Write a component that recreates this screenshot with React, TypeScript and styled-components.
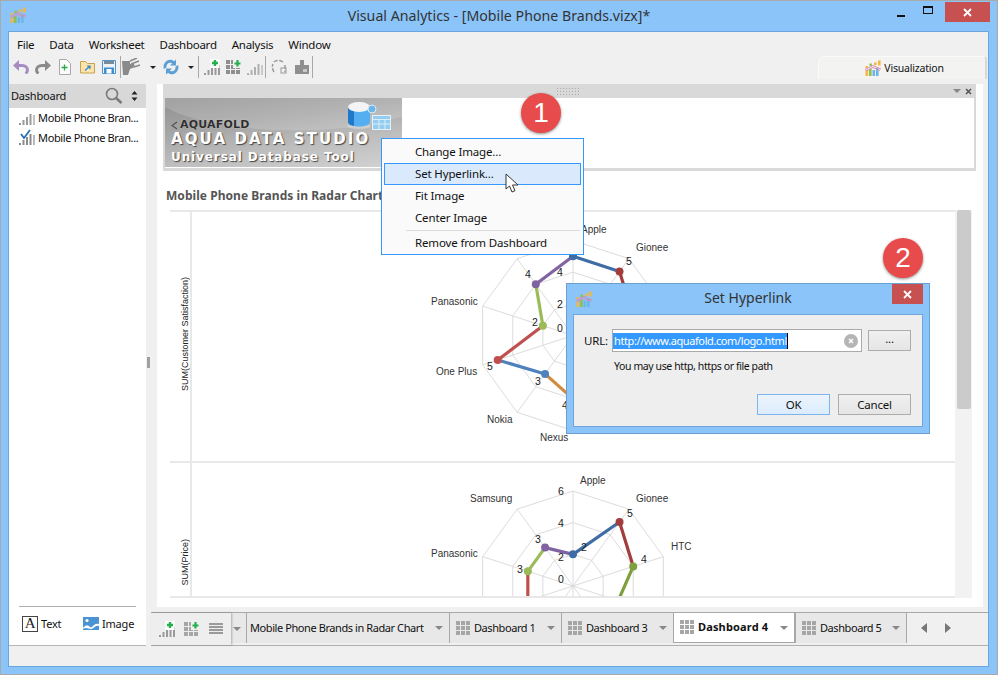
import React from "react";
import styled, { createGlobalStyle } from "styled-components";

const UI = `"Noto Sans", "Liberation Sans", sans-serif`;
const CH = `"Liberation Sans", Arial, sans-serif`;
const LG = `"DejaVu Sans", "Liberation Sans", sans-serif`;

const Global = createGlobalStyle`
  html, body { margin: 0; padding: 0; background: #fff; }
  * { box-sizing: border-box; }
`;

const Win = styled.div`
  position: relative; width: 998px; height: 675px; overflow: hidden;
  background: #8ac4f9; border: 1px solid #a9a9a9; display: flex; flex-direction: column;
  font: 11.5px ${UI}; color: #111;
`;
const TitleBar = styled.div`
  height: 30px; flex: none; display: grid; grid-template-columns: 1fr auto 1fr; align-items: start; padding-left: 9px;
`;
const TitleIconSlot = styled.div`padding-top: 6px; display: flex;`;
const TitleText = styled.div`font-size: 14.2px; color: #333; padding-top: 5px; margin-right: 9px;`;
const WinButtons = styled.div`display: flex; justify-content: flex-end; align-items: flex-start; margin-right: 7px; padding-top: 1px;`;
const GlyphBtn = styled.div`width: 27px; height: 20px; display: flex; align-items: center; justify-content: center;`;
const MinGlyph = styled.div`width: 8px; height: 2px; background: #111; margin-top: 7px;`;
const MaxGlyph = styled.div`width: 10px; height: 8px; border: 1px solid #111; border-top-width: 2px; margin-top: -5px;`;
const CloseBtn = styled.div`
  width: 45px; height: 20px; margin-left: 4px; background: #c75050; display: flex; align-items: center; justify-content: center;
`;
const Client = styled.div`
  flex: 1; margin: 0 8px 7px 7px; border: 1px solid #69a5de; background: #f0f0f0;
  display: flex; flex-direction: column; min-height: 0;
`;
const MenuBar = styled.div`
  height: 23px; flex: none; display: flex; align-items: center; padding: 2px 0 0 8px; gap: 15px; letter-spacing: -0.26px;
`;
const ToolRow = styled.div`height: 24px; flex: none; display: flex; align-items: center; padding-left: 1px;`;
const ToolSlot = styled.div<{ $w?: number; $ml?: number }>`
  width: ${p => p.$w ?? 22}px; height: 22px; margin-left: ${p => p.$ml ?? 0}px;
  display: flex; align-items: center; justify-content: center; flex: none;
`;
const ToolSep = styled.div`width: 1px; height: 22px; background: #a8a8a8; flex: none;`;
const VizTab = styled.div`
  margin-left: auto; margin-right: 1px; margin-top: 1px; width: 169px; height: 23px; border: 1px solid #fafafa; border-bottom: none;
  border-right: 2px solid #d8d8d8; border-radius: 6px 4px 0 0; background: #f3f3f2; display: flex; align-items: center; justify-content: center; gap: 3px;
  font-size: 10.5px; padding-left: 5px; letter-spacing: -0.2px;
`;
const Body = styled.div`flex: 1; display: flex; min-height: 0;`;
const Sidebar = styled.div`
  width: 137px; margin-top: 5px; background: #fff; border-bottom: 1px solid #b5b5b5; display: flex; flex-direction: column; flex: none;
`;
const SideHead = styled.div`
  height: 24px; flex: none; background: #d8d8d8; display: flex; align-items: center; padding: 0 8px 2px 2px; font-size: 11px; letter-spacing: -0.2px;
`;
const SideTitle = styled.span`flex: 1;`;
const SortSlot = styled.span`display: flex; margin-left: 8px; padding-top: 2px;`;
const SideItem = styled.div`
  height: 20px; flex: none; display: flex; align-items: center; padding: 0 0 2px 9px; gap: 3px; font-size: 11px; white-space: nowrap; letter-spacing: -0.35px;
`;
const SideFoot = styled.div`
  margin: auto 10px 0; height: 39px; flex: none; border-top: 1px solid #b0b0b0; display: flex; align-items: center; padding: 0 0 5px 3px;
`;
const FootBtn = styled.div<{ $w: number }>`width: ${p => p.$w}px; flex: none; display: flex; align-items: center; gap: 3px; font-size: 11px; letter-spacing: -0.2px;`;
const TextGlyph = styled.div`
  width: 16px; height: 16px; border: 1px solid #444; display: flex; align-items: center; justify-content: center;
  font: 15px "Liberation Serif", serif; color: #222; line-height: 1; flex: none;
`;
const Splitter = styled.div`width: 5px; display: flex; align-items: center; justify-content: center; flex: none;`;
const Grip = styled.div`
  width: 3px; height: 11px; background: radial-gradient(circle, #9a9a9a 0.7px, transparent 0.8px) 0 0 / 2px 2px;
`;
const Right = styled.div`flex: 1; display: flex; flex-direction: column; min-width: 0;`;
const Panel = styled.div`
  margin: 5px 5px 5px 6px; flex: 1; background: #fff; padding: 0 7px 0 6px; min-height: 0; display: flex; flex-direction: column;
`;
const ImageWidget = styled.div`
  flex: none; border-left: 2px solid #d9d9d9; border-right: 2px solid #d9d9d9; border-bottom: 3px solid #d9d9d9;
`;
const WidgetHead = styled.div`
  height: 14px; margin: 0 -2px; background: #d9d9d9; display: flex; align-items: center; justify-content: flex-end; gap: 4px; padding-right: 4px; position: relative;
`;
const HandleDots = styled.div`
  position: absolute; left: 393px; top: 3px; width: 24px; height: 10px;
  background: radial-gradient(circle, #aaa 0.7px, transparent 0.8px) 0 0 / 3px 3px;
`;
const Caret = styled.div<{ $c?: string; $w?: number }>`
  width: 0; height: 0; flex: none;
  border-left: ${p => p.$w ?? 4}px solid transparent; border-right: ${p => p.$w ?? 4}px solid transparent;
  border-top: ${p => p.$w ?? 4}px solid ${p => p.$c ?? "#888"};
`;
const Logo = styled.div`
  position: relative; width: 237px; height: 69px; margin-bottom: 1px; padding: 21px 0 0 6px; overflow: hidden;
  background:
    radial-gradient(ellipse 240px 70px at 130px -10px, rgba(255,255,255,.16) 60%, transparent 61%),
    linear-gradient(172deg, #8f8f8f 0%, #a5a5a5 35%, #bdbdbd 65%, #d2d2d2 100%);
  display: flex; flex-direction: column; font-family: ${LG}; font-weight: 700;
`;
const LogoSmall = styled.div`
  display: flex; align-items: center; gap: 2px; font-size: 11px; color: #2e2e2e; line-height: 12px; letter-spacing: 0.2px; text-shadow: 0 0 1px #ddd;
`;
const LogoBig = styled.div`
  font-size: 15px; line-height: 16px; color: #fff; letter-spacing: 2.1px; text-shadow: 1px 1px 1px #444; white-space: nowrap;
`;
const LogoSub = styled.div`
  font-size: 12px; line-height: 14px; margin-top: 3px; color: #fff; letter-spacing: 0.9px; text-shadow: 1px 1px 1px #444; white-space: nowrap;
`;
const LogoArt = styled.svg`position: absolute; left: 180px; top: 1px;`;
const ChartTitle = styled.div`
  height: 39px; flex: none; display: flex; align-items: center; padding: 10px 0 0 3px; font-size: 12px; font-weight: 700; color: #555; white-space: nowrap; letter-spacing: 0.05px;
`;
const ChartFrame = styled.div`margin-left: 7px; display: flex; height: 388px; flex: none;`;
const Viewport = styled.div`
  width: 785px; height: 388px; border-top: 2px solid #e8e8e8; border-bottom: 2px solid #e8e8e8; overflow: hidden; flex: none;
`;
const ChartRow = styled.div<{ $h: number }>`
  height: ${p => p.$h}px; display: flex; border-bottom: 2px solid #e8e8e8;
`;
const AxisCell = styled.div`
  width: 22px; flex: none; border-right: 2px solid #e8e8e8; display: flex; align-items: center; justify-content: center; padding-bottom: 4px;
`;
const AxisText = styled.div`
  writing-mode: vertical-rl; transform: rotate(180deg); font: 9px ${CH}; color: #222; white-space: nowrap; margin-left: 10px;
`;
const Track = styled.div`width: 17px; background: #f2f2f2; padding: 0 1px 0 2px;`;
const Thumb = styled.div`height: 199px; background: #cbcbcb; border-radius: 2px;`;
const TabBar = styled.div`
  height: 34px; flex: none; border-top: 1px solid #a8a8a8; border-bottom: 1px solid #b0b0b0; display: flex; background: #f0f0f0;
`;
const TabTools = styled.div`
  width: 80px; flex: none; display: flex; align-items: center; padding-left: 3px; box-shadow: 1px 0 2px rgba(0,0,0,.25); position: relative; background: #eee;
`;
const TabCaretArea = styled.div`
  width: 15px; flex: none; background: #e8e8e8; display: flex; align-items: center; justify-content: center; padding-top: 1px;
  margin-bottom: 2px; padding-right: 4px;
`;
const Tab = styled.div<{ $w: number; $active?: boolean; $pl?: number }>`
  width: ${p => p.$w}px; flex: none; display: flex; align-items: center; gap: 3px; padding: 0 6px 0 ${p => p.$pl ?? 6}px;
  white-space: nowrap; font-size: 11px; letter-spacing: ${p => (p.$active ? "0.15px" : "-0.42px")};
  background: ${p => (p.$active ? "#fff" : "#e8e8e8")};
  border-left: 1px solid #a8a8a8;
  margin-top: ${p => (p.$active ? "-1px" : "0")};
  margin-bottom: 2px;
  border-top: ${p => (p.$active ? "1px solid #a8a8a8" : "none")};
  border-right: ${p => (p.$active ? "1px solid #a8a8a8" : "none")};
  border-bottom: ${p => (p.$active ? "1px solid #a8a8a8" : "none")};
  font-weight: ${p => (p.$active ? 700 : 400)};
`;
const TabLabel = styled.span`flex: 1; padding-bottom: 2px;`;
const TabNav = styled.div`
  flex: 1; display: flex; align-items: center; gap: 18px; padding-left: 14px; border-left: 1px solid #a8a8a8; margin-bottom: 2px;
`;
const NavArrow = styled.div<{ $dir: "l" | "r" }>`
  width: 0; height: 0; border-top: 5px solid transparent; border-bottom: 5px solid transparent;
  ${p => (p.$dir === "l" ? "border-right: 6px solid #777;" : "border-left: 6px solid #777;")}
`;
const Status = styled.div`height: 20px; flex: none;`;

const CtxMenu = styled.div`
  position: absolute; left: 380px; top: 137px; width: 203px; height: 117px; background: #fafafa; border: 1px solid #3399ff;
  padding: 2px 2px; display: flex; flex-direction: column; letter-spacing: -0.15px;
`;
const CtxItem = styled.div<{ $hot?: boolean }>`
  height: 22px; flex: none; display: flex; align-items: center; padding: 0 0 1px 30px;
  border: 1px solid ${p => (p.$hot ? "#3399ff" : "transparent")}; background: ${p => (p.$hot ? "#daeafc" : "transparent")};
`;
const CtxSep = styled.div`height: 1px; background: #dcdcdc; margin: 1px 1px 1px 22px; flex: none;`;
const Badge = styled.div<{ $x: number; $y: number }>`
  position: absolute; left: ${p => p.$x}px; top: ${p => p.$y}px; width: 40px; height: 40px; border-radius: 50%;
  background: #e84b4b; color: #fff; font: 28px ${CH}; display: flex; align-items: center; justify-content: center;
  box-shadow: 0 1px 3px rgba(0,0,0,.45);
`;
const Cursor = styled.svg`position: absolute; left: 504px; top: 172px;`;
const Dialog = styled.div`
  position: absolute; left: 565px; top: 282px; width: 364px; height: 151px; background: #8ac4f9; border: 1px solid #6b9fd0;
  padding: 0 6px 6px; display: flex; flex-direction: column;
`;
const DlgHead = styled.div`height: 30px; flex: none; display: grid; grid-template-columns: 1fr auto 1fr; align-items: start;`;
const DlgIconSlot = styled.div`padding: 7px 0 0 3px; display: flex;`;
const DlgTitle = styled.div`font-size: 14px; color: #333; padding-top: 4px;`;
const DlgClose = styled.div`
  justify-self: end; width: 31px; height: 20px; background: #c75050; display: flex; align-items: center; justify-content: center;
`;
const DlgBody = styled.div`
  flex: 1; background: #eee; border: 1px solid #6ea6dc; padding: 14px 11px 0 10px; display: flex; flex-direction: column;
`;
const UrlRow = styled.div`display: flex; align-items: center; height: 23px;`;
const UrlLabel = styled.span`width: 28px; flex: none; letter-spacing: -0.2px;`;
const UrlInput = styled.div`
  width: 250px; height: 23px; background: #fff; border: 1px solid #aaa; display: flex; align-items: center; padding: 0 3px 0 0;
`;
const Selected = styled.span`
  background: #3399ff; color: #fff; border-right: 1px solid #000; padding: 0 0 0 1px; line-height: 16px; white-space: nowrap; font-size: 11px; letter-spacing: -0.4px;
`;
const ClearBtn = styled.div`
  margin-left: auto; width: 14px; height: 14px; border-radius: 50%; background: #b5b5b5; display: flex; align-items: center; justify-content: center;
`;
const GreyBtn = styled.div<{ $w: number; $primary?: boolean }>`
  width: ${p => p.$w}px; height: 21px; flex: none; display: flex; align-items: center; justify-content: center; letter-spacing: -0.2px;
  border: 1px solid ${p => (p.$primary ? "#7eb4ea" : "#acacac")};
  background: ${p => (p.$primary ? "linear-gradient(#ecf4fc, #dcecfc)" : "linear-gradient(#f0f0f0, #e5e5e5)")};
`;
const BrowseBtn = styled(GreyBtn)`margin-left: 6px; padding-bottom: 4px;`;
const Hint = styled.div`font-size: 10.5px; padding: 6px 0 0 30px; height: 27px; line-height: 16px; letter-spacing: -0.4px;`;
const BtnRow = styled.div`display: flex; justify-content: flex-end; gap: 8px; margin-top: 15px;`;

/* ---------- drawings ---------- */
const IconSvg = styled.svg`flex: none; display: block;`;
const Svg: React.FC<{ w?: number; h?: number; children: React.ReactNode }> = ({ w = 16, h = 16, children }) => (
  <IconSvg width={w} height={h} viewBox={`0 0 ${w} ${h}`} fill="none">{children}</IconSvg>
);
const AppIcon = () => (
  <Svg>
    <rect x="0.5" y="10" width="2.6" height="6" fill="#f6b73c" />
    <rect x="4" y="9" width="2.6" height="7" fill="#8cc152" />
    <rect x="7.5" y="10" width="2.6" height="6" fill="#6db7e8" />
    <rect x="11" y="8" width="2.6" height="8" fill="#6db7e8" />
    <rect x="13" y="0.5" width="2.6" height="5" fill="#f6b73c" />
    <rect x="9" y="2.500" width="2.6" height="2.500" fill="#f6b73c" />
    <rect x="4.5" y="3.500" width="2.4" height="2.500" fill="#8cc152" />
    <rect x="0.5" y="6" width="2.4" height="2" fill="#f6b73c" />
    <path d="M0 9.500 8 5.500 16 9M1 11 8 7.500 15 10.500" stroke="#d78bb0" strokeWidth="1" />
  </Svg>
);
const X = ({ c = "#fff", s = 9, sw = 1.8 }: { c?: string; s?: number; sw?: number }) => (
  <Svg w={s} h={s}><path d={`M1 1 ${s - 1} ${s - 1}M${s - 1} 1 1 ${s - 1}`} stroke={c} strokeWidth={sw} /></Svg>
);
const Bars = ({ c = "#9a9a9a", check, plus }: { c?: string; check?: boolean; plus?: boolean }) => (
  <Svg w={17} h={17}>
    <rect x="1" y="14" width="2" height="2" fill={c} />
    <rect x="4.500" y="11" width="2" height="5" fill={c} />
    <rect x="8" y="8" width="2" height="8" fill={c} />
    <rect x="11.500" y="5" width="2" height="11" fill={c} />
    <rect x="15" y="6" width="2" height="10" fill={c} opacity={plus ? 1 : 0.6} />
    {check && <path d="M3 5 6 9 12 1" stroke="#2a6fb5" strokeWidth="1.800" />}
    {plus && <g><rect x="7.500" y="0" width="9" height="9" fill="#fff" /><path d="M12 1v6M9 4h6" stroke="#22b14c" strokeWidth="2.400" /></g>}
  </Svg>
);
const Grid = ({ c = "#a6a6a6", plus }: { c?: string; plus?: boolean }) => (
  <Svg w={15} h={15}>
    {[0, 5, 10].map(y => [0, 5, 10].map(x => <rect key={`${x}-${y}`} x={x} y={y} width="4" height="4" fill={c} />))}
    {plus && <g><rect x="7" y="-1" width="9" height="9" fill="#f0f0f0" /><path d="M11.500 0v6.500M8.500 3.500h6" stroke="#22b14c" strokeWidth="2.200" /></g>}
  </Svg>
);
const ListIcon = () => (
  <Svg w={15} h={12}>{[0, 3, 6, 9].map(y => <rect key={y} x="0" y={y} width="14" height="2" fill="#9a9a9a" />)}</Svg>
);
const Undo = ({ c, flip }: { c: string; flip?: boolean }) => (
  <Svg w={16} h={14}>
    <g transform={flip ? "translate(16 0) scale(-1 1)" : undefined}>
      <path d="M0 5.500 6 0v11z" fill={c} />
      <path d="M5 5.500h4c3.500 0 5.500 2 5.500 4.500 0 1.500-.8 2.800-2 3.500" stroke={c} strokeWidth="3" />
    </g>
  </Svg>
);
const NewDoc = () => (
  <Svg w={14} h={16}>
    <path d="M1.500 .5h7l4 4v11h-11z" fill="#fbfbfb" stroke="#a8a8a8" />
    <path d="M6.500 5.500v6M3.500 8.500h6" stroke="#2aa84a" strokeWidth="1.300" />
  </Svg>
);
const Folder = () => (
  <Svg w={15} h={14}>
    <path d="M.5 13V1.500h5l2 2h7V13z" fill="#fbe3ae" stroke="#c9a24e" />
    <path d="M5 10.500 10 6M7 6h3v3" stroke="#2f86c9" strokeWidth="1.200" />
  </Svg>
);
const Save = () => (
  <Svg w={14} h={14}>
    <path d="M.5 .5h13v13H.5z" fill="#eef3f7" stroke="#4d93cc" />
    <rect x="2" y="1" width="10" height="3" fill="#7c8a96" />
    <rect x="2" y="7.500" width="10" height="6" fill="#3e8fd0" />
    <rect x="4.500" y="9" width="5" height="4.500" fill="#fff" />
  </Svg>
);
const Brush = () => (
  <Svg w={20} h={18}>
    <path d="M1 3h8v3h4l1 3-5 2-2 6H2z" fill="#8a8a8a" />
    <path d="M9 3 16 0M10 6 18 3M13 9 19 7" stroke="#8a8a8a" strokeWidth="1.500" />
  </Svg>
);
const Refresh = () => (
  <Svg w={16} h={16}>
    <path d="M13 .5v6H7l2.200-2.200C6 2.500 3 5 3.500 8.500L.8 10C-.8 3.500 6 -2 11 2.300z" fill="#5a9fd6" />
    <path d="M3 15.500v-6h6l-2.200 2.200c3.200 1.800 6.200-.7 5.700-4.200L15.200 6c1.600 6.500-5.200 12-10.200 7.700z" fill="#5a9fd6" />
  </Svg>
);
const Shape = () => (
  <Svg w={16} h={16}>
    <path d="M3 3c2-2 6-2 9 0M14 6v7M3 13c-2-3-2-6-1-8" stroke="#9a9a9a" strokeWidth="1.500" strokeDasharray="4 1.500" />
    <rect x="10" y="9" width="5" height="5" stroke="#9a9a9a" />
  </Svg>
);
const Blocks = () => (
  <Svg w={15} h={14}>
    <path d="M0 5h5V0h4v5h5v9H0z" fill="#8f8f8f" />
    <rect x="8" y="9" width="4" height="3" fill="#c8c8c8" />
  </Svg>
);
const Search = () => (
  <Svg w={18} h={17}>
    <circle cx="7" cy="7" r="5.500" stroke="#7a7a7a" strokeWidth="1.600" />
    <path d="M11 11 16.500 16" stroke="#7a7a7a" strokeWidth="2.600" />
  </Svg>
);
const SortIcon = () => (
  <Svg w={7} h={10}><path d="M3.500 0 6.500 3.500H.5zM3.500 10 .5 6.500h6z" fill="#222" /></Svg>
);
const ImgIcon = () => (
  <Svg w={16} h={13}>
    <rect width="16" height="13" fill="#4a94d4" />
    <circle cx="4" cy="3.500" r="1.600" fill="#fff" />
    <path d="M0 11c3-4 5-3 7-1s4-5 9-3v2c-4-1-5 3-8 3s-5-2-8 0z" fill="#fff" />
  </Svg>
);

/* ---------- radar ---------- */
const AXES = 10;
const R = 95;
const pt = (i: number, r: number, cx: number, cy: number): [number, number] => {
  const a = (i * 2 * Math.PI) / AXES;
  return [cx + r * Math.sin(a), cy - r * Math.cos(a)];
};
type RadarProps = {
  h: number; cy: number; values: number[]; colors: string[];
  labels: { t: string; x: number; y: number }[];
  nums: { t: string; x: number; y: number }[];
};
const RadarSvg = styled.svg`flex: none; display: block;`;
const Radar: React.FC<RadarProps> = ({ h, cy, values, colors, labels, nums }) => {
  const cx = 381;
  const unit = R / 6;
  const points = values.map((v, i) => pt(i, v * unit, cx, cy));
  return (
    <RadarSvg width="761" height={h}>
      {[2, 4, 6].map(v => (
        <polygon key={v} fill="none" stroke="#dcdcdc"
          points={Array.from({ length: AXES }, (_, i) => pt(i, v * unit, cx, cy).join(",")).join(" ")} />
      ))}
      {Array.from({ length: AXES }, (_, i) => {
        const [x, y] = pt(i, R, cx, cy);
        return <line key={i} x1={cx} y1={cy} x2={x} y2={y} stroke="#dcdcdc" />;
      })}
      {points.map((p, i) => {
        const next = points[(i + 1) % AXES];
        return <line key={i} x1={p[0]} y1={p[1]} x2={next[0]} y2={next[1]} stroke={colors[i]} strokeWidth="3.2" />;
      })}
      {points.map((p, i) => <circle key={i} cx={p[0]} cy={p[1]} r="4" fill={colors[i]} />)}
      {labels.map(l => <text key={l.t} x={l.x} y={l.y} fontFamily={CH} fontSize="10" fill="#333">{l.t}</text>)}
      {nums.map((n, i) => <text key={i} x={n.x} y={n.y} fontFamily={CH} fontSize="10.500" fill="#222">{n.t}</text>)}
    </RadarSvg>
  );
};

const C = { blue: "#3f6ca5", red: "#a33d3d", green: "#7f9f3f", orange: "#d08a3e", blue2: "#4f81bd", red2: "#c0504d", lime: "#9bbb59", purple: "#8064a2", gray: "#bbb" };
const X0 = 192;
const chart1: RadarProps = {
  h: 249, cy: 123.5,
  values: [5, 5, 4, 3, 2, 4, 3, 5, 2, 4],
  colors: [C.blue, C.red, C.gray, C.gray, C.gray, C.orange, C.blue2, C.red2, C.lime, C.purple],
  labels: [
    { t: "Apple", x: 581 - X0, y: 21 }, { t: "Gionee", x: 636 - X0, y: 39 },
    { t: "Panasonic", x: 431 - X0, y: 93 }, { t: "One Plus", x: 436 - X0, y: 163 },
    { t: "Nokia", x: 487 - X0, y: 211 }, { t: "Nexus", x: 540 - X0, y: 229 },
  ],
  nums: [
    { t: "5", x: 626 - X0, y: 53 }, { t: "4", x: 525 - X0, y: 66 }, { t: "4", x: 557 - X0, y: 64 },
    { t: "2", x: 557 - X0, y: 96 }, { t: "2", x: 532 - X0, y: 114 }, { t: "0", x: 557 - X0, y: 120 },
    { t: "5", x: 487 - X0, y: 158 }, { t: "3", x: 535 - X0, y: 173 }, { t: "4", x: 562 - X0, y: 197 },
  ],
};
const chart2: RadarProps = {
  h: 202, cy: 123,
  values: [2, 5, 4, 3, 2, 2, 2, 3, 3, 3],
  colors: [C.blue, C.red, C.green, C.gray, C.gray, C.gray, C.gray, C.red2, C.lime, C.purple],
  labels: [
    { t: "Apple", x: 580 - X0, y: 21 }, { t: "Samsung", x: 470 - X0, y: 39 }, { t: "Gionee", x: 636 - X0, y: 39 },
    { t: "HTC", x: 671 - X0, y: 87 }, { t: "Panasonic", x: 431 - X0, y: 94 },
  ],
  nums: [
    { t: "6", x: 558 - X0, y: 32 }, { t: "5", x: 627 - X0, y: 54 }, { t: "4", x: 558 - X0, y: 64 },
    { t: "3", x: 535 - X0, y: 80 }, { t: "2", x: 581 - X0, y: 88 }, { t: "2", x: 558 - X0, y: 98 },
    { t: "4", x: 641 - X0, y: 100 }, { t: "3", x: 517 - X0, y: 110 }, { t: "0", x: 558 - X0, y: 120 },
  ],
};

const TABS = [
  { label: "Dashboard 1", w: 112 }, { label: "Dashboard 3", w: 112 },
];

export default function App() {
  return (
    <>
      <Global />
      <Win>
        <TitleBar>
          <TitleIconSlot><AppIcon /></TitleIconSlot>
          <TitleText>Visual Analytics - [Mobile Phone Brands.vizx]*</TitleText>
          <WinButtons>
            <GlyphBtn><MinGlyph /></GlyphBtn>
            <GlyphBtn><MaxGlyph /></GlyphBtn>
            <CloseBtn><X s={9} /></CloseBtn>
          </WinButtons>
        </TitleBar>
        <Client>
          <MenuBar>
            {["File", "Data", "Worksheet", "Dashboard", "Analysis", "Window"].map(m => <span key={m}>{m}</span>)}
          </MenuBar>
          <ToolRow>
            <ToolSlot><Undo c="#a78cc4" /></ToolSlot>
            <ToolSlot><Undo c="#8a8a8a" flip /></ToolSlot>
            <ToolSlot><NewDoc /></ToolSlot>
            <ToolSlot><Folder /></ToolSlot>
            <ToolSlot><Save /></ToolSlot>
            <ToolSep />
            <ToolSlot $w={20}><Brush /></ToolSlot>
            <ToolSlot $w={24}><Caret $c="#222" $w={3} /></ToolSlot>
            <ToolSlot $w={12}><Refresh /></ToolSlot>
            <ToolSlot $w={14} $ml={7}><Caret $c="#222" $w={3} /></ToolSlot>
            <ToolSep />
            <ToolSlot $w={24}><Bars plus /></ToolSlot>
            <ToolSlot $w={20}><Grid plus c="#8f8f8f" /></ToolSlot>
            <ToolSlot $w={22}><Bars c="#b0b0b0" /></ToolSlot>
            <ToolSep />
            <ToolSlot $w={26}><Shape /></ToolSlot>
            <ToolSlot $w={20}><Blocks /></ToolSlot>
            <ToolSep />
            <VizTab><AppIcon />Visualization</VizTab>
          </ToolRow>
          <Body>
            <Sidebar>
              <SideHead>
                <SideTitle>Dashboard</SideTitle>
                <Search />
                <SortSlot><SortIcon /></SortSlot>
              </SideHead>
              <SideItem><Bars />Mobile Phone Bran...</SideItem>
              <SideItem><Bars c="#8a8a8a" check />Mobile Phone Bran...</SideItem>
              <SideFoot>
                <FootBtn $w={61}><TextGlyph>A</TextGlyph>Text</FootBtn>
                <FootBtn $w={55}><ImgIcon />Image</FootBtn>
              </SideFoot>
            </Sidebar>
            <Splitter><Grip /></Splitter>
            <Right>
              <Panel>
                <ImageWidget>
                  <WidgetHead>
                    <HandleDots />
                    <Caret $c="#888" $w={4} />
                    <X c="#555" s={7} sw={1.6} />
                  </WidgetHead>
                  <Logo>
                    <LogoArt width="50" height="36" viewBox="0 0 50 36">
                      <ellipse cx="14" cy="27" rx="12" ry="3" fill="#cfcfcf" />
                      <path d="M3 8v15c0 6 22 6 22 0V8z" fill="#55aeef" />
                      <path d="M3 8v15c0 2.500 4 3.500 6 4V10z" fill="#1f78c8" />
                      <ellipse cx="14" cy="8" rx="11" ry="5" fill="#f4f4f4" />
                      <circle cx="27" cy="10" r="4" fill="#6eb5e8" stroke="#d8eaf8" />
                      <rect x="27.500" y="16.500" width="18" height="14" fill="#94cdf0" stroke="#e6f2fa" />
                      <path d="M27.500 20.500h18M27.500 25h18M34 20.500v10M40 20.500v10" stroke="#d8eefb" />
                    </LogoArt>
                    <LogoSmall>
                      <Svg w={7} h={9}><path d="M6 1 1 4.500 6 8" stroke="#555" strokeWidth="1.300" /></Svg>
                      AQUAFOLD
                    </LogoSmall>
                    <LogoBig>AQUA DATA STUDIO</LogoBig>
                    <LogoSub>Universal Database Tool</LogoSub>
                  </Logo>
                </ImageWidget>
                <ChartTitle>Mobile Phone Brands in Radar Chart</ChartTitle>
                <ChartFrame>
                  <Viewport>
                    <ChartRow $h={251}>
                      <AxisCell><AxisText>SUM(Customer Satisfaction)</AxisText></AxisCell>
                      <Radar {...chart1} />
                    </ChartRow>
                    <ChartRow $h={204}>
                      <AxisCell><AxisText>SUM(Price)</AxisText></AxisCell>
                      <Radar {...chart2} />
                    </ChartRow>
                  </Viewport>
                  <Track><Thumb /></Track>
                </ChartFrame>
              </Panel>
              <TabBar>
                <TabTools>
                  <ToolSlot $w={25}><Bars plus /></ToolSlot>
                  <ToolSlot $w={25}><Grid plus /></ToolSlot>
                  <ToolSlot $w={25}><ListIcon /></ToolSlot>
                </TabTools>
                <TabCaretArea><Caret /></TabCaretArea>
                <Tab $w={203} $pl={3}><TabLabel>Mobile Phone Brands in Radar Chart</TabLabel><Caret /></Tab>
                {TABS.map(t => (
                  <Tab key={t.label} $w={t.w}><Grid /><TabLabel>{t.label}</TabLabel><Caret /></Tab>
                ))}
                <Tab $w={122} $active><Grid /><TabLabel>Dashboard 4</TabLabel><Caret /></Tab>
                <Tab $w={111}><Grid /><TabLabel>Dashboard 5</TabLabel><Caret /></Tab>
                <TabNav><NavArrow $dir="l" /><NavArrow $dir="r" /></TabNav>
              </TabBar>
            </Right>
          </Body>
          <Status />
        </Client>

        <CtxMenu>
          <CtxItem>Change Image...</CtxItem>
          <CtxItem $hot>Set Hyperlink...</CtxItem>
          <CtxItem>Fit Image</CtxItem>
          <CtxItem>Center Image</CtxItem>
          <CtxSep />
          <CtxItem>Remove from Dashboard</CtxItem>
        </CtxMenu>
        <Badge $x={520} $y={92}>1</Badge>
        <Badge $x={882} $y={237}>2</Badge>
        <Cursor width="14" height="21" viewBox="0 0 14 21">
          <path d="M1 1v15l3.500-3 2.500 6 3-1.300-2.500-5.700H13z" fill="#fff" stroke="#333" strokeWidth="1" />
        </Cursor>
        <Dialog>
          <DlgHead>
            <DlgIconSlot><AppIcon /></DlgIconSlot>
            <DlgTitle>Set Hyperlink</DlgTitle>
            <DlgClose><X s={9} /></DlgClose>
          </DlgHead>
          <DlgBody>
            <UrlRow>
              <UrlLabel>URL:</UrlLabel>
              <UrlInput>
                <Selected>http://www.aquafold.com/logo.html</Selected>
                <ClearBtn><X s={6} sw={1.5} /></ClearBtn>
              </UrlInput>
              <BrowseBtn $w={43}>...</BrowseBtn>
            </UrlRow>
            <Hint>You may use http, https or file path</Hint>
            <BtnRow>
              <GreyBtn $w={73} $primary>OK</GreyBtn>
              <GreyBtn $w={73}>Cancel</GreyBtn>
            </BtnRow>
          </DlgBody>
        </Dialog>
      </Win>
    </>
  );
}
